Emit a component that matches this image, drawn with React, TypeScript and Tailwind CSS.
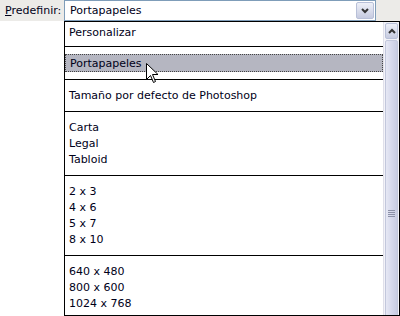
import React from 'react';

const groups: string[][] = [
  ['Tamaño por defecto de Photoshop'],
  ['Carta', 'Legal', 'Tabloid'],
  ['2 x 3', '4 x 6', '5 x 7', '8 x 10'],
  ['640 x 480', '800 x 600', '1024 x 768'],
];

function Cursor() {
  return (
    <svg className="absolute left-[146px] top-[63px]" width="13" height="20" viewBox="0 0 13 20">
      <path d="M0.5 0.5 L0.5 16.5 L4.5 12.5 L7.5 19.5 L9.5 18.5 L6.5 11.5 L12 11.5 Z" fill="#fff" stroke="#000" strokeWidth="1" />
    </svg>
  );
}

export default function App() {
  return (
    <div className="relative w-[400px] h-[316px] overflow-hidden bg-white text-[11px] text-[#000018]" style={{ fontFamily: '"DejaVu Sans", Tahoma, sans-serif' }}>
      <div className="flex h-[21px] bg-[#ecebe8]">
        <div className="w-[64px] pl-[5px] pt-[3px]">
          <span className="underline">P</span>redefinir:
        </div>
        <div className="w-[312px] h-[21px] flex bg-white border border-[#7f9db9]">
          <div className="flex-1 pl-[5px] pt-[2px]">Portapapeles</div>
          <div className="w-[18px] h-[17px] mt-[1px] mr-[1px] flex items-center justify-center rounded-[2px] border border-[#b8c0d8] bg-gradient-to-b from-[#eef0f8] to-[#c6cbe0]">
            <svg width="8" height="6" viewBox="0 0 8 6">
              <path d="M1 1 L4 4 L7 1" fill="none" stroke="#333" strokeWidth="2" />
            </svg>
          </div>
        </div>
      </div>

      <div className="ml-[64px] w-[336px] h-[295px] flex border border-black bg-white overflow-hidden">
        <div className="flex-1 flex flex-col">
          <div className="shrink-0 h-[25px] pl-[4px] pt-[3px] border-b border-black">Personalizar</div>
          <div className="shrink-0 h-[33px] flex flex-col justify-center border-b border-black">
            <div className="h-[18px] pl-[4px] pt-[1px] bg-[#b5b6c1] border border-dotted border-[#444]">Portapapeles</div>
          </div>
          {groups.map((g, i) => (
            <div key={i} className={`shrink-0 pl-[4px] pt-[8px] pb-[7px] ${i < groups.length - 1 ? 'border-b border-black' : ''}`}>
              {g.map((t) => (
                <div key={t} className="h-[16px] leading-[16px]">{t}</div>
              ))}
            </div>
          ))}
        </div>
        <div className="w-[16px] flex flex-col bg-[#f3f3f8] border-l border-[#e0e0ea] overflow-hidden">
          <div className="shrink-0 h-[16px] m-[1px] flex items-center justify-center rounded-[2px] border border-[#b8c0d8] bg-gradient-to-b from-[#eef0f8] to-[#c6cbe0]">
            <svg width="8" height="6" viewBox="0 0 8 6">
              <path d="M1 5 L4 2 L7 5" fill="none" stroke="#333" strokeWidth="2" />
            </svg>
          </div>
          <div className="shrink-0 h-[346px] mx-[1px] flex items-center justify-center rounded-[2px] border border-[#c2c7dc] bg-gradient-to-r from-[#e6e8f4] via-[#d6d9ec] to-[#c8cce2]">
            <div className="flex flex-col gap-[1px]">
              <div className="w-[7px] h-px bg-[#8c91a8]" />
              <div className="w-[7px] h-px bg-[#8c91a8]" />
              <div className="w-[7px] h-px bg-[#8c91a8]" />
              <div className="w-[7px] h-px bg-[#8c91a8]" />
            </div>
          </div>
        </div>
      </div>
      <Cursor />
    </div>
  );
}
